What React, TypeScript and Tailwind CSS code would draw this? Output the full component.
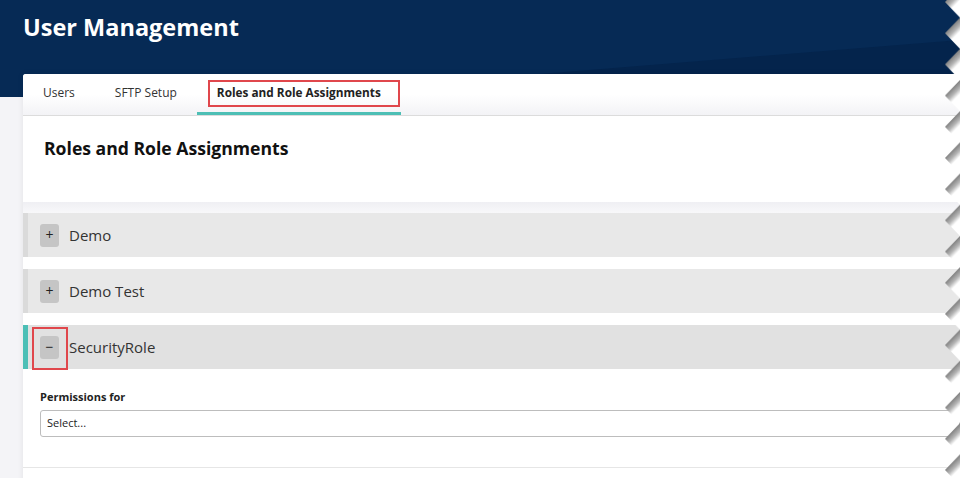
import React from "react";

function TornEdge() {
  return (
    <svg
      width="16"
      height="478"
      viewBox="0 0 16 478"
      className="absolute top-0 right-0 pointer-events-none"
    >
      <defs>
        <linearGradient id="tg" gradientUnits="userSpaceOnUse" x1="8" y1="8" x2="15" y2="15">
          <stop offset="0" stopColor="#7f7f7f" />
          <stop offset="0.55" stopColor="#b5b5b5" />
          <stop offset="1" stopColor="#ffffff" />
        </linearGradient>
        <pattern id="tp" patternUnits="userSpaceOnUse" x="0" y="-13.6" width="16" height="31.2">
          <polygon points="16,0 1,15.6 16,31.2" fill="url(#tg)" />
        </pattern>
      </defs>
      <rect x="0" y="0" width="16" height="478" fill="url(#tp)" />
    </svg>
  );
}

function Row({
  label,
  expanded,
  highlight,
}: {
  label: string;
  expanded?: boolean;
  highlight?: boolean;
}) {
  return (
    <div
      className={
        expanded
          ? "h-[44px] flex items-center border-l-[5px] border-[#4cbfb6] bg-[#e1e1e1] pl-[12px]"
          : "h-[44px] flex items-center border-l-[5px] border-[#dadada] bg-[#e8e8e8] pl-[12px]"
      }
    >
      <div className="relative">
        <div className="w-[19px] h-[23px] rounded-[3px] bg-[#c5c5c5] flex items-center justify-center text-[14px] leading-none text-[#222]">
          {expanded ? "−" : "+"}
        </div>
        {highlight && (
          <div className="absolute -left-[8px] -top-[9px] w-[36px] h-[43px] border-2 border-[#e0474c]" />
        )}
      </div>
      <span className="ml-[10px] text-[15px] text-[#333]">{label}</span>
    </div>
  );
}

export default function App() {
  return (
    <div className="relative w-[960px] h-[478px] overflow-hidden bg-[#f4f4f7] font-['Open_Sans',sans-serif]">
      {/* Header */}
      <div className="relative h-[97px] bg-[#062a55] px-[23px] pt-[11px]">
        <svg className="absolute inset-0" width="960" height="97" viewBox="0 0 960 97">
          <polygon points="540,74 960,40 960,74" fill="#04244c" />
        </svg>
        <h1 className="relative text-[23.5px] leading-[33px] font-bold text-white">User Management</h1>
      </div>

      {/* Card */}
      <div className="relative ml-[23px] -mt-[23px] bg-white rounded-tl-[3px] shadow-[0_0_6px_rgba(0,0,0,0.08)]">
        {/* Tabs */}
        <div className="h-[42px] flex border-b border-[#dcdcdc] bg-gradient-to-b from-white via-white to-[#f3f3f6] rounded-tl-[3px]">
          <div className="px-[20px] flex items-center pb-[3px] text-[12px] text-[#333]">Users</div>
          <div className="px-[20px] flex items-center pb-[3px] text-[12px] text-[#333]">SFTP Setup</div>
          <div className="relative px-[20px] flex items-center pb-[3px] text-[11.8px] font-bold text-[#222]">
            Roles and Role Assignments
            <div className="absolute left-[11px] right-[1px] top-[6px] h-[27px] border-2 border-[#e0474c]" />
            <div className="absolute left-0 right-0 bottom-0 h-[3px] bg-[#4dbfb5]" />
          </div>
        </div>

        {/* Heading */}
        <div className="h-[86px] pl-[21px] pt-[20px]">
          <h2 className="text-[17.6px] leading-[24px] font-bold text-[#111]">Roles and Role Assignments</h2>
        </div>

        {/* band */}
        <div className="h-[11px] bg-gradient-to-b from-[#efeff3] to-[#f8f8fa]" />

        <Row label="Demo" />
        <div className="h-[12px] bg-white" />
        <Row label="Demo Test" />
        <div className="h-[12px] bg-white" />
        <Row label="SecurityRole" expanded highlight />

        {/* Expanded content */}
        <div className="pl-[17px] pt-[20px] pb-[30px] border-b border-[#e6e6e6]">
          <div className="text-[11px] leading-[15px] font-bold text-[#222]">Permissions for</div>
          <div className="mt-[6px] h-[27px] border border-[#bdbdbd] rounded-[3px] flex items-center pl-[6px] text-[11px] text-[#222]">
            Select...
          </div>
        </div>
        <div className="h-[20px] bg-white" />
      </div>

      <TornEdge />
    </div>
  );
}
